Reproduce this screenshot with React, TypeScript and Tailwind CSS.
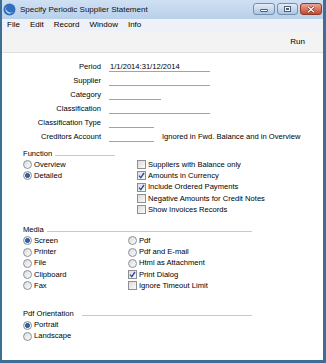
import React from 'react';

const font = "font-['Liberation_Sans',Arial,sans-serif]";

function Radio({ checked }: { checked?: boolean }) {
  return (
    <span className="flex-none w-[9px] h-[9px] rounded-full border border-[#8d9196] bg-linear-to-br from-[#d9dcdf] to-[#fbfbfb] flex items-center justify-center">
      {checked && <span className="w-[5px] h-[5px] rounded-full bg-[#2a67bf] border border-[#1b4d94]" />}
    </span>
  );
}

function Check({ checked }: { checked?: boolean }) {
  return (
    <span className="flex-none w-[9px] h-[9px] border border-[#8f8f8f] bg-linear-to-br from-[#dcdcdc] to-[#fafafa] flex items-center justify-center">
      {checked && (
        <svg width="7" height="7" viewBox="0 0 7 7">
          <path d="M1 3.6 L2.8 5.6 L6 1" fill="none" stroke="#2b4f9c" strokeWidth="1.4" />
        </svg>
      )}
    </span>
  );
}

function Option({ kind, label, checked }: { kind: 'radio' | 'check'; label: string; checked?: boolean }) {
  return (
    <div className="flex items-center h-[11.2px] gap-[2px]">
      {kind === 'radio' ? <Radio checked={checked} /> : <Check checked={checked} />}
      <span className="leading-none whitespace-nowrap">{label}</span>
    </div>
  );
}

function Header({ title, width, gap }: { title: string; width: string; gap: string }) {
  return (
    <div className={`flex items-center h-[11.2px] ${width}`}>
      <span className="leading-none">{title}</span>
      <span className={`flex-1 h-px bg-[#c9c9c9] mt-[3px] ${gap}`} />
    </div>
  );
}

function FieldRow({ label, value, width, note }: { label: string; value?: string; width: string; note?: string }) {
  return (
    <div className="flex h-[14px]">
      <div className="w-[99px] text-right leading-[14px]">{label}</div>
      <div className={`ml-[8px] mt-[2px] h-[10px] border-b border-[#a3a3a3] leading-[9px] pl-[1px] ${width}`}>{value}</div>
      {note && <div className="ml-[8px] leading-[14px] whitespace-nowrap">{note}</div>}
    </div>
  );
}

export default function App() {
  return (
    <div className={`w-[326px] h-[363px] flex flex-col bg-[#bcd2eb] border-l-2 border-r-[3px] border-b-[3px] border-[#3d6f94] text-[7.6px] text-black ${font}`}>
      {/* Title bar */}
      <div className="h-[19px] flex items-center bg-linear-to-b from-[#cfe0f3] to-[#b9d0ea]">
        <svg width="13" height="13" viewBox="0 0 13 13" className="ml-[1px]">
          <circle cx="6.5" cy="6.5" r="6" fill="#2f6fc0" />
          <path d="M4 3 A4.2 4.2 0 1 0 10.5 8 A3.4 3.4 0 1 1 4 3 Z" fill="#ffffff" />
        </svg>
        <span className="ml-[4px] text-[8px] text-[#111] whitespace-nowrap">Specify Periodic Supplier Statement</span>
        <div className="ml-auto mr-[1px] flex items-center gap-[2px] mt-[-1px]">
          <div className="w-[22px] h-[12px] rounded-[3px] border border-[#7390b3] bg-linear-to-b from-[#e3ecf7] to-[#aec4df] flex items-center justify-center">
            <span className="w-[8px] h-[3px] mt-[3px] bg-[#f4f7fb] border border-[#4a5f7a] rounded-[1px]" />
          </div>
          <div className="w-[21px] h-[12px] rounded-[3px] border border-[#7390b3] bg-linear-to-b from-[#e3ecf7] to-[#aec4df] flex items-center justify-center">
            <span className="w-[7px] h-[6px] border border-[#4a5f7a] bg-[#f4f7fb] flex items-center justify-center">
              <span className="w-[3px] h-[2px] border border-[#4a5f7a]" />
            </span>
          </div>
          <div className="w-[22px] h-[12px] rounded-[3px] border border-[#8c3a2c] bg-linear-to-b from-[#e9a595] to-[#c6452f] flex items-center justify-center">
            <svg width="8" height="7" viewBox="0 0 8 7">
              <path d="M1 0.8 L7 6.2 M7 0.8 L1 6.2" stroke="#5a1d12" strokeWidth="2.4" />
              <path d="M1 0.8 L7 6.2 M7 0.8 L1 6.2" stroke="#ffffff" strokeWidth="1.4" />
            </svg>
          </div>
        </div>
      </div>

      {/* Menu bar */}
      <div className="h-[12px] flex items-center gap-[10px] pl-[5px] bg-[#eef2f8] text-[8px]">
        <span>File</span>
        <span>Edit</span>
        <span>Record</span>
        <span>Window</span>
        <span>Info</span>
      </div>

      {/* Toolbar */}
      <div className="h-[22px] flex items-center justify-end pr-[18px] bg-[#f3f3f3] border-b border-[#dedede]">
        <span className="text-[8px]">Run</span>
      </div>

      {/* Content */}
      <div className="flex-1 bg-white pt-[7px]">
        <FieldRow label="Period" value="1/1/2014:31/12/2014" width="w-[101px]" />
        <FieldRow label="Supplier" width="w-[101px]" />
        <FieldRow label="Category" width="w-[52px]" />
        <FieldRow label="Classification" width="w-[101px]" />
        <FieldRow label="Classification Type" width="w-[45px]" />
        <FieldRow label="Creditors Account" width="w-[45px]" note="Ignored in Fwd. Balance and in Overview" />

        <div className="pl-[21px] mt-[4px]">
          <Header title="Function" width="w-[92px]" gap="ml-[3px]" />
          <div className="flex">
            <div className="w-[114px]">
              <Option kind="radio" label="Overview" />
              <Option kind="radio" label="Detailed" checked />
            </div>
            <div>
              <Option kind="check" label="Suppliers with Balance only" />
              <Option kind="check" label="Amounts in Currency" checked />
              <Option kind="check" label="Include Ordered Payments" checked />
              <Option kind="check" label="Negative Amounts for Credit Notes" />
              <Option kind="check" label="Show Invoices Records" />
            </div>
          </div>

          <div className="mt-[9px]">
            <Header title="Media" width="w-[229px]" gap="ml-[3px]" />
            <div className="flex">
              <div className="w-[105px]">
                <Option kind="radio" label="Screen" checked />
                <Option kind="radio" label="Printer" />
                <Option kind="radio" label="File" />
                <Option kind="radio" label="Clipboard" />
                <Option kind="radio" label="Fax" />
              </div>
              <div>
                <Option kind="radio" label="Pdf" />
                <Option kind="radio" label="Pdf and E-mail" />
                <Option kind="radio" label="Html as Attachment" />
                <Option kind="check" label="Print Dialog" checked />
                <Option kind="check" label="Ignore Timeout Limit" />
              </div>
            </div>
          </div>

          <div className="mt-[17px]">
            <Header title="Pdf Orientation" width="w-[229px]" gap="ml-[8px]" />
            <Option kind="radio" label="Portrait" checked />
            <Option kind="radio" label="Landscape" />
          </div>
        </div>
      </div>
    </div>
  );
}
